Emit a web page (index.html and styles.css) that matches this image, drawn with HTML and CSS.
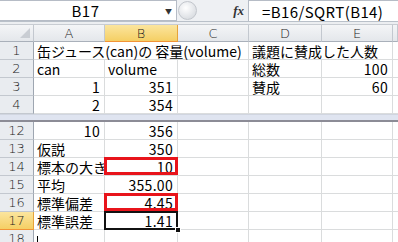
FILE: index.html
```html
<!DOCTYPE html>
<html lang="ja">
<head>
  <meta charset="UTF-8"/>
  <title>Book1 - Excel</title>
  <link rel="stylesheet" href="styles.css">
</head>
<body>
  <!-- formula bar -->
  <div class="fbar">
    <div class="namebox">
      <span class="name">B17</span>
      <span class="drop">&#9660;</span>
    </div>
    <div class="knob"></div>
    <div class="fx"><i>fx</i></div>
    <div class="formula">=B16/SQRT(B14)</div>
  </div>
  <div class="fbar-gap"></div>

  <div class="sheet">
    <div class="row head">
      <div class="corner"></div>
      <div class="colh">A</div>
      <div class="colh active">B</div>
      <div class="colh">C</div>
      <div class="colh">D</div>
      <div class="colh">E</div>
      <div class="colh"></div>
    </div>

    <div class="row">
      <div class="rowh">1</div>
      <div class="cell span3">缶ジュース(can)の 容量(volume)</div>
      <div class="cell span2">議題に賛成した人数</div>
      <div class="cell"></div>
    </div>
    <div class="row">
      <div class="rowh">2</div>
      <div class="cell">can</div>
      <div class="cell">volume</div>
      <div class="cell"></div>
      <div class="cell">総数</div>
      <div class="cell num">100</div>
      <div class="cell"></div>
    </div>
    <div class="row">
      <div class="rowh">3</div>
      <div class="cell num">1</div>
      <div class="cell num">351</div>
      <div class="cell"></div>
      <div class="cell">賛成</div>
      <div class="cell num">60</div>
      <div class="cell"></div>
    </div>
    <div class="row">
      <div class="rowh">4</div>
      <div class="cell num">2</div>
      <div class="cell num">354</div>
      <div class="cell"></div>
      <div class="cell"></div>
      <div class="cell"></div>
      <div class="cell"></div>
    </div>

    <div class="split"></div>

    <div class="row">
      <div class="rowh">12</div>
      <div class="cell num">10</div>
      <div class="cell num">356</div>
      <div class="cell"></div>
      <div class="cell"></div>
      <div class="cell"></div>
      <div class="cell"></div>
    </div>
    <div class="row">
      <div class="rowh">13</div>
      <div class="cell">仮説</div>
      <div class="cell num">350</div>
      <div class="cell"></div>
      <div class="cell"></div>
      <div class="cell"></div>
      <div class="cell"></div>
    </div>
    <div class="row">
      <div class="rowh">14</div>
      <div class="cell">標本の大きさ</div>
      <div class="cell num marked">10</div>
      <div class="cell"></div>
      <div class="cell"></div>
      <div class="cell"></div>
      <div class="cell"></div>
    </div>
    <div class="row">
      <div class="rowh">15</div>
      <div class="cell">平均</div>
      <div class="cell num">355.00</div>
      <div class="cell"></div>
      <div class="cell"></div>
      <div class="cell"></div>
      <div class="cell"></div>
    </div>
    <div class="row">
      <div class="rowh">16</div>
      <div class="cell">標準偏差</div>
      <div class="cell num marked">4.45</div>
      <div class="cell"></div>
      <div class="cell"></div>
      <div class="cell"></div>
      <div class="cell"></div>
    </div>
    <div class="row">
      <div class="rowh active">17</div>
      <div class="cell">標準誤差</div>
      <div class="cell num selected">1.41</div>
      <div class="cell"></div>
      <div class="cell"></div>
      <div class="cell"></div>
      <div class="cell"></div>
    </div>
    <div class="row">
      <div class="rowh">18</div>
      <div class="cell"><span class="caret"></span></div>
      <div class="cell"></div>
      <div class="cell"></div>
      <div class="cell"></div>
      <div class="cell"></div>
      <div class="cell"></div>
    </div>
  </div>
</body>
</html>
```

FILE: styles.css
```css
*, *::before, *::after {
  box-sizing: border-box;
}
body {
  margin: 0;
  width: 398px;
  height: 242px;
  overflow: hidden;
  background: #fff;
  color: #000;
  font-family: 'Noto Sans CJK JP', 'DejaVu Sans', sans-serif;
  font-size: 14px;
}

/* formula bar */
.fbar {
  display: flex;
  height: 22px;
  background: #eef0f3;
  border-bottom: 1px solid #b9c0c9;
}
.namebox {
  width: 177px;
  display: flex;
  align-items: center;
  background: #fff;
  border: 1px solid #b6bcc6;
  border-left: none;
}
.name {
  flex: 1;
  text-align: center;
  padding-left: 6px;
  font-size: 15px;
  letter-spacing: 0.5px;
}
.drop {
  font-size: 7px;
  color: #333;
  padding-right: 4px;
}
.knob {
  width: 19px;
  height: 19px;
  margin: 1px 0 0 1px;
  border-radius: 50%;
  border: 1px solid #c2c6cc;
  background: radial-gradient(circle at 40% 35%, #fff 0, #e9ebee 45%, #cfd3d8 100%);
}
.fx {
  width: 52px;
  display: flex;
  align-items: center;
  justify-content: flex-end;
  padding-right: 4px;
  border-right: 1px solid #b6bcc6;
}
.fx i {
  font-family: 'Liberation Serif', serif;
  font-weight: bold;
  font-size: 13px;
  color: #333;
}
.formula {
  flex: 1;
  background: #fff;
  border-top: 1px solid #b6bcc6;
  padding: 1px 0 0 13px;
  font-size: 15px;
  letter-spacing: 0.4px;
  line-height: 20px;
}
.fbar-gap {
  height: 3px;
  background: #eceef1;
  border-bottom: 1px solid #c8ccd2;
}

/* sheet */
.row {
  display: grid;
  grid-template-columns: 34px 71px 73px 71px 73px 71px 5px;
  height: 18px;
}
.row.head {
  height: 17px;
}
.corner,
.colh,
.rowh {
  background: linear-gradient(#f4f5f7, #e4e7eb);
  border-right: 1px solid #c3c8cf;
  border-bottom: 1px solid #a9b0ba;
  color: #222;
  display: flex;
  align-items: center;
  justify-content: center;
  font-family: 'DejaVu Sans', sans-serif;
  font-weight: 200;
  font-size: 13px;
}
.corner {
  position: relative;
}
.corner::after {
  content: "";
  position: absolute;
  right: 3px;
  bottom: 3px;
  border-left: 10px solid transparent;
  border-bottom: 10px solid #c9cdd3;
}
.rowh {
  background: #e9ecf0;
  border-bottom: 1px solid #c3c8cf;
  border-right: 1px solid #9ea6b1;
}
.colh.active,
.rowh.active {
  background: linear-gradient(#fbe59e, #f5cf64);
  border-right: 1px solid #e6a33a;
  border-bottom: 1px solid #f29436;
}
.cell {
  border-right: 1px solid #dadcdd;
  border-bottom: 1px solid #dadcdd;
  padding: 1px 3px 0 3px;
  line-height: 16px;
  white-space: nowrap;
  overflow: hidden;
  position: relative;
}
.cell.num {
  text-align: right;
  padding-right: 4px;
  letter-spacing: 0.3px;
}
.span3 {
  grid-column: span 3;
  overflow: visible;
}
.span2 {
  grid-column: span 2;
}

/* freeze pane split */
.split {
  height: 8px;
  background: #dfe4f0;
  border-top: 1px solid #d0d5e0;
  border-bottom: 2px solid #8c8c96;
}

/* highlighted cells */
.marked {
  overflow: visible;
}
.marked::after {
  content: "";
  position: absolute;
  left: -1px;
  top: -1px;
  right: -1px;
  bottom: 0;
  border: 3px solid #e8141b;
}
.selected {
  overflow: visible;
}
.selected::after {
  content: "";
  position: absolute;
  left: -1px;
  top: -1px;
  right: -1px;
  bottom: -1px;
  border: 2px solid #111;
}
.selected::before {
  content: "";
  position: absolute;
  right: -4px;
  bottom: -4px;
  width: 6px;
  height: 6px;
  background: #111;
  border: 1px solid #fff;
  z-index: 1;
}
.caret {
  display: inline-block;
  width: 1px;
  height: 6px;
  margin-top: 5px;
  background: #000;
  vertical-align: top;
}
```
